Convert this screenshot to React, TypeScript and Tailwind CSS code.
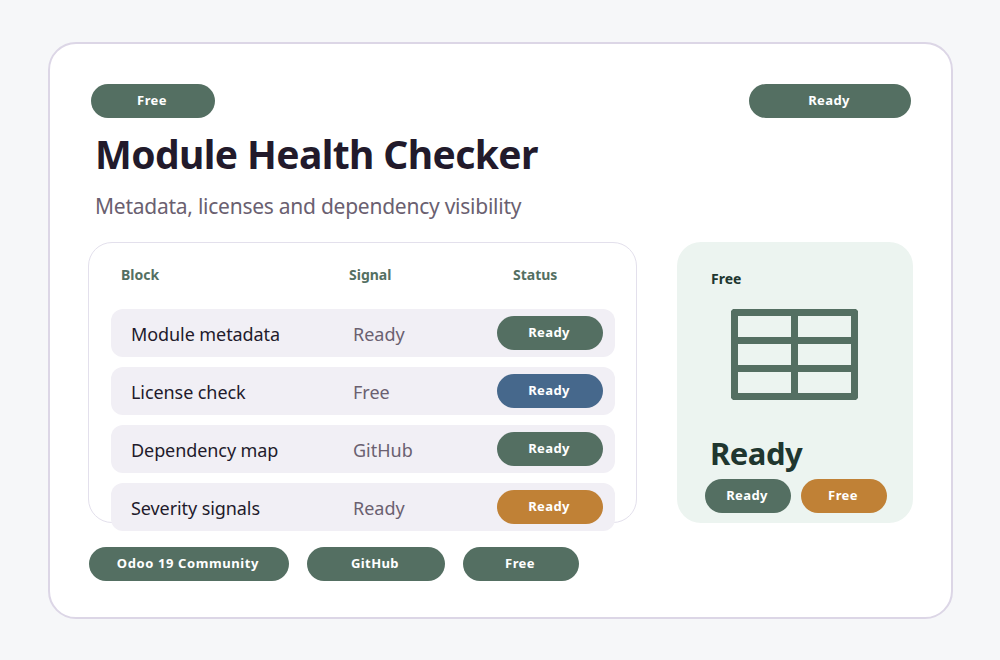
const font = "font-['Noto_Sans',sans-serif]";

const TONES: Record<string, string> = {
  green: "bg-[#546f62]",
  blue: "bg-[#46688c]",
  orange: "bg-[#c08136]",
};

const ROWS = [
  { block: "Module metadata", signal: "Ready", tone: "green" },
  { block: "License check", signal: "Free", tone: "blue" },
  { block: "Dependency map", signal: "GitHub", tone: "green" },
  { block: "Severity signals", signal: "Ready", tone: "orange" },
];

function Pill({
  label,
  width,
  tone = "green",
  spacing = "tracking-[0.4px]",
}: {
  label: string;
  width: string;
  tone?: string;
  spacing?: string;
}) {
  return (
    <span
      className={`flex h-[34px] shrink-0 items-center justify-center rounded-full pb-px pr-[2px] text-[13px] font-bold text-white ${spacing} ${TONES[tone]} ${width}`}
    >
      {label}
    </span>
  );
}

function TableIcon() {
  return (
    <svg width="127" height="91" viewBox="0 0 127 91" className="block" fill="#546f62" fillRule="evenodd">
      <path d="M2 0H125L127 2V89L125 91H2L0 89V2ZM7 7V28H60V7ZM67 7V28H120V7ZM7 35V56H60V35ZM67 35V56H120V35ZM7 63V84H60V63ZM67 63V84H120V63Z" />
    </svg>
  );
}

export default function App() {
  return (
    <div className={`h-[660px] w-[1000px] overflow-hidden bg-[#f6f7f9] pl-[48px] pt-[42px] ${font}`}>
      <div className="h-[577px] w-[905px] rounded-[28px] border-2 border-[#dcd6e6] bg-white pl-[38px] pr-[38px] pt-[40px]">
        <div className="flex justify-between pl-[3px] pr-[2px]">
          <Pill label="Free" width="w-[124px]" />
          <Pill label="Ready" width="w-[162px]" />
        </div>

        <h1 className="ml-[7px] mt-[8px] text-[39px] font-bold leading-[56px] tracking-[-0.6px] text-[#221a2b]">
          Module Health Checker
        </h1>
        <p className="ml-[7px] mt-[8px] text-[21px] leading-[32px] tracking-[-0.25px] text-[#6a6070]">
          Metadata, licenses and dependency visibility
        </p>

        <div className="mt-[20px] flex gap-[40px]">
          <div className="h-[281px] w-[549px] rounded-[24px] border border-[#e3e0ec] pl-[22px] pr-[21px]">
            <div className="flex pt-[22px] text-sm font-bold leading-5 text-[#546f62]">
              <span className="ml-[10px] w-[228px]">Block</span>
              <span className="w-[164px]">Signal</span>
              <span>Status</span>
            </div>
            <div className="mt-[24px] flex flex-col gap-[10px]">
              {ROWS.map((row) => (
                <div key={row.block} className="flex h-[48px] items-center rounded-[12px] bg-[#f1eff5] pl-[20px] pr-[12px]">
                  <span className="w-[222px] pt-px text-lg tracking-[-0.08px] text-[#221a2b]">{row.block}</span>
                  <span className="pt-px text-lg text-[#6a6070]">{row.signal}</span>
                  <span className="ml-auto">
                    <Pill label="Ready" width="w-[106px]" tone={row.tone} />
                  </span>
                </div>
              ))}
            </div>
          </div>

          <div className="h-[281px] w-[236px] rounded-[24px] bg-[#ecf4f0] pt-[27px]">
            <div className="ml-[34px] text-sm font-bold leading-5 text-[#20362f]">Free</div>
            <div className="ml-[54px] mt-[20px]">
              <TableIcon />
            </div>
            <div className="ml-[33px] mt-[29px] text-[31px] font-bold leading-[48px] tracking-[-0.5px] text-[#20362f]">
              Ready
            </div>
            <div className="ml-[28px] mt-[2px] flex gap-[10px]">
              <Pill label="Ready" width="w-[86px]" />
              <Pill label="Free" width="w-[86px]" tone="orange" />
            </div>
          </div>
        </div>

        <div className="ml-px mt-[24px] flex gap-[18px]">
          <Pill label="Odoo 19 Community" width="w-[200px]" spacing="tracking-[0.6px]" />
          <Pill label="GitHub" width="w-[138px]" />
          <Pill label="Free" width="w-[116px]" />
        </div>
      </div>
    </div>
  );
}
